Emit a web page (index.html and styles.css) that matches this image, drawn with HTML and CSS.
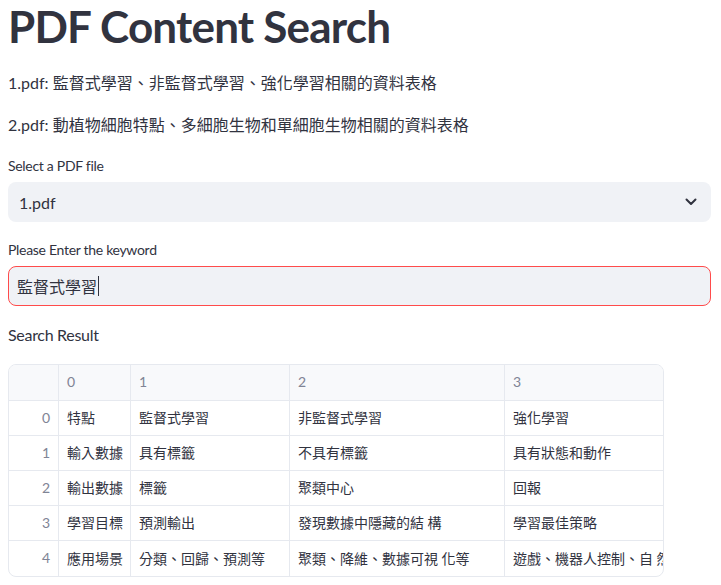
FILE: index.html
```html
<!DOCTYPE html>
<html lang="zh-Hant">
<head>
<meta charset="utf-8">
<title>PDF Content Search</title>
<link rel="stylesheet" href="styles.css">
</head>
<body>
<main class="page">
  <h1 class="title">PDF Content Search</h1>
  <p class="md">1.pdf: 監督式學習、非監督式學習、強化學習相關的資料表格</p>
  <p class="md">2.pdf: 動植物細胞特點、多細胞生物和單細胞生物相關的資料表格</p>

  <label class="label">Select a PDF file</label>
  <div class="select">
    <span class="select-value">1.pdf</span>
    <svg class="chev" width="12" height="8" viewBox="0 0 12 8"><path d="M1.5 1.5 L6 6 L10.5 1.5" fill="none" stroke="#31333f" stroke-width="2" stroke-linecap="round" stroke-linejoin="round"/></svg>
  </div>

  <label class="label label-2">Please Enter the keyword</label>
  <div class="input"><span class="input-value">監督式學習</span><span class="caret"></span></div>

  <p class="md result-title">Search Result</p>

  <div class="table-wrap">
    <div class="table">
      <div class="row head">
        <div class="cell idx"></div>
        <div class="cell c0">0</div>
        <div class="cell c1">1</div>
        <div class="cell c2">2</div>
        <div class="cell c3">3</div>
      </div>
      <div class="row">
        <div class="cell idx">0</div>
        <div class="cell c0">特點</div>
        <div class="cell c1">監督式學習</div>
        <div class="cell c2">非監督式學習</div>
        <div class="cell c3">強化學習</div>
      </div>
      <div class="row">
        <div class="cell idx">1</div>
        <div class="cell c0">輸入數據</div>
        <div class="cell c1">具有標籤</div>
        <div class="cell c2">不具有標籤</div>
        <div class="cell c3">具有狀態和動作</div>
      </div>
      <div class="row">
        <div class="cell idx">2</div>
        <div class="cell c0">輸出數據</div>
        <div class="cell c1">標籤</div>
        <div class="cell c2">聚類中心</div>
        <div class="cell c3">回報</div>
      </div>
      <div class="row">
        <div class="cell idx">3</div>
        <div class="cell c0">學習目標</div>
        <div class="cell c1">預測輸出</div>
        <div class="cell c2">發現數據中隱藏的結 構</div>
        <div class="cell c3">學習最佳策略</div>
      </div>
      <div class="row last">
        <div class="cell idx">4</div>
        <div class="cell c0">應用場景</div>
        <div class="cell c1">分類、回歸、預測等</div>
        <div class="cell c2">聚類、降維、數據可視 化等</div>
        <div class="cell c3">遊戲、機器人控制、自 然語言處理等</div>
      </div>
    </div>
  </div>
</main>
</body>
</html>
```

FILE: styles.css
```css
html, body {
  margin: 0;
  padding: 0;
  background: #ffffff;
}

body {
  font-family: "Lato", "Noto Sans CJK TC", sans-serif;
  color: #31333f;
}

.page {
  padding: 0 10px 0 8px;
  display: flex;
  flex-direction: column;
}

.title {
  margin: 0;
  font-size: 44px;
  line-height: 53px;
  font-weight: 700;
  letter-spacing: -0.8px;
}

.md {
  margin: 0;
  font-size: 16px;
  line-height: 26px;
}

.title + .md {
  margin-top: 17px;
}

.md + .md {
  margin-top: 16px;
}

.label {
  margin-top: 18px;
  font-size: 14px;
  line-height: 20px;
  height: 20px;
  letter-spacing: -0.3px;
}

.label-2 {
  margin-top: 18px;
}

.select {
  margin-top: 6px;
  height: 40px;
  background: #f0f2f6;
  border-radius: 8px;
  display: flex;
  align-items: center;
  justify-content: space-between;
  padding: 0 14px 0 11px;
  box-sizing: border-box;
  font-size: 16px;
}

.chev {
  display: block;
}

.input {
  margin-top: 6px;
  height: 40px;
  background: #f0f2f6;
  border: 1px solid #ff4b4b;
  border-radius: 8px;
  display: flex;
  align-items: center;
  padding: 0 8px;
  box-sizing: border-box;
  font-size: 16px;
}

.caret {
  display: block;
  width: 1px;
  height: 20px;
  background: #31333f;
  margin-left: 1px;
}

.md.result-title {
  margin-top: 16px;
  letter-spacing: -0.3px;
}

.table-wrap {
  margin-top: 16px;
  width: 656px;
  box-sizing: border-box;
  border: 1px solid #e6e9ef;
  border-radius: 8px;
  overflow: hidden;
}

.table {
  display: flex;
  flex-direction: column;
  width: max-content;
}

.row {
  display: flex;
  height: 35px;
  border-bottom: 1px solid #e6e9ef;
  box-sizing: border-box;
}

.row.head {
  height: 36px;
  background: #f8f9fb;
}

.row.last {
  border-bottom: none;
  height: 35px;
}

.cell {
  box-sizing: border-box;
  font-size: 14px;
  display: flex;
  align-items: center;
  padding: 0 8px 2px;
  border-right: 1px solid #e6e9ef;
  white-space: nowrap;
  overflow: hidden;
}

.head .cell {
  color: #808495;
}

.idx {
  width: 50px;
  justify-content: flex-end;
  color: #808495;
}

.c0 { width: 72px; }
.c1 { width: 159px; }
.c2 { width: 215px; }
.c3 { width: 190px; }
```
